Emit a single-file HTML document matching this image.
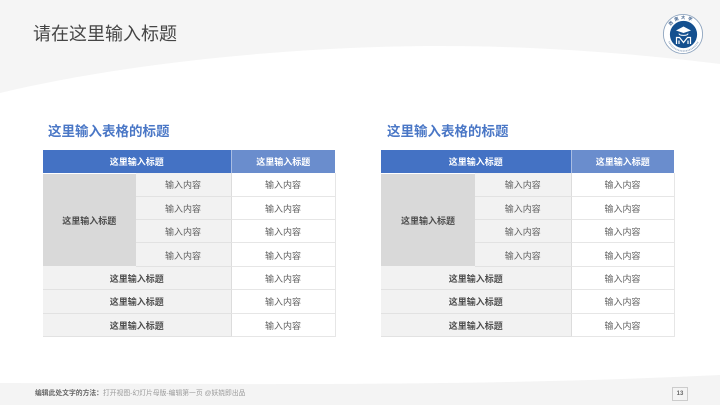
<!DOCTYPE html>
<html lang="zh">
<head>
<meta charset="utf-8">
<style>
html,body{margin:0;padding:0;width:720px;height:405px;overflow:hidden;background:#fff}
body{position:relative;font-family:"Liberation Sans","Noto Sans CJK SC",sans-serif;color:#636363}
.bg{position:absolute;left:0;top:0}
.title{position:absolute;left:33px;top:21px;font-size:18px;line-height:26px;color:#454545;white-space:nowrap}
.sub{position:absolute;top:122px;font-size:13.5px;line-height:20px;font-weight:700;color:#4a77c6;white-space:nowrap}
table{position:absolute;top:150px;width:292px;height:187px;border-collapse:collapse;table-layout:fixed;font-size:9px;text-align:center}
td{padding:2px 0 0;border:0;line-height:12px;box-sizing:border-box}
.h1{background:#4472c4;color:#fff;font-weight:700;height:23px;padding:1px 0 0}
.h2{background:#6a8dcd;color:#fff;font-weight:700;border-left:1px solid #a9bde3;padding:1px 0 0}
.g{background:#d9d9d9;color:#4d4d4d;font-weight:700;border-top:1px solid #fff}
.m{background:#f2f2f2;border-bottom:1px solid #e2e2e2;height:23.2px}
.w{background:#fff;border-bottom:1px solid #e6e6e6;border-right:1px solid #e6e6e6;border-left:1px solid #dcdcdc}
.b{background:#f2f2f2;color:#4d4d4d;font-weight:700;border-bottom:1px solid #e2e2e2;height:23.3px}
.foot{position:absolute;left:35px;top:389px;font-size:6.8px;line-height:10px;color:#9a9a9a;white-space:nowrap}
.foot b{color:#666}
.num{position:absolute;left:672px;top:387px;width:16px;height:14px;box-sizing:border-box;border:1px solid #cccccc;font-size:6px;font-weight:700;line-height:12px;text-align:center;color:#666}
.logo{position:absolute;left:658px;top:10px}
</style>
</head>
<body>
<svg class="bg" width="720" height="405" viewBox="0 0 720 405">
<path d="M0 0H720V64C640 54 540 46 440 46C300 46 130 62 0 93Z" fill="#f5f5f5"/>
<path d="M0 383C220 384 470 387 720 375V405H0Z" fill="#f4f4f4"/>
</svg>
<div class="title">请在这里输入标题</div>
<svg class="logo" width="48" height="48" viewBox="0 0 48 48">
<circle cx="25" cy="24" r="19.6" fill="#fff" stroke="#8fa5bf" stroke-width="0.9"/>
<circle cx="25.5" cy="24.5" r="13.6" fill="#14508f"/>
<defs><path id="ta" d="M10 24.5A15.5 15.5 0 0 1 41 24.5"/></defs>
<text font-size="4.2" font-weight="700" fill="#3c5f8c" letter-spacing="2.2" font-family="Liberation Sans,Noto Sans CJK SC,sans-serif"><textPath href="#ta" startOffset="9">西南大学</textPath></text>
<path d="M18 20.5L25.5 16.5L33 20.5L25.5 23Z" fill="#fff"/>
<path d="M21 23.5C21 26 30 26 30 23.5" fill="none" stroke="#fff" stroke-width="1"/>
<path d="M18.5 34V27.5H21.5L25.5 32.5L29.5 27.5H32.5V34M21 34V30.5M30 34V30.5" fill="none" stroke="#fff" stroke-width="1.2"/>
<path d="M11 31.5A15.8 15.8 0 0 0 40 31.5" fill="none" stroke="#a9b9cc" stroke-width="1.6" stroke-dasharray="1 .6"/>
</svg>

<div class="sub" style="left:48px">这里输入表格的标题</div>
<table style="left:43px">
<colgroup><col style="width:92.5px"><col style="width:95.5px"><col style="width:104px"></colgroup>
<tr><td class="h1" colspan="2">这里输入标题</td><td class="h2">这里输入标题</td></tr>
<tr><td class="g" rowspan="4">这里输入标题</td><td class="m">输入内容</td><td class="w">输入内容</td></tr>
<tr><td class="m">输入内容</td><td class="w">输入内容</td></tr>
<tr><td class="m">输入内容</td><td class="w">输入内容</td></tr>
<tr><td class="m">输入内容</td><td class="w">输入内容</td></tr>
<tr><td class="b" colspan="2">这里输入标题</td><td class="w">输入内容</td></tr>
<tr><td class="b" colspan="2">这里输入标题</td><td class="w">输入内容</td></tr>
<tr><td class="b" colspan="2">这里输入标题</td><td class="w">输入内容</td></tr>
</table>

<div class="sub" style="left:387px">这里输入表格的标题</div>
<table style="left:381px;width:293px">
<colgroup><col style="width:94px"><col style="width:96px"><col style="width:103px"></colgroup>
<tr><td class="h1" colspan="2">这里输入标题</td><td class="h2">这里输入标题</td></tr>
<tr><td class="g" rowspan="4">这里输入标题</td><td class="m">输入内容</td><td class="w">输入内容</td></tr>
<tr><td class="m">输入内容</td><td class="w">输入内容</td></tr>
<tr><td class="m">输入内容</td><td class="w">输入内容</td></tr>
<tr><td class="m">输入内容</td><td class="w">输入内容</td></tr>
<tr><td class="b" colspan="2">这里输入标题</td><td class="w">输入内容</td></tr>
<tr><td class="b" colspan="2">这里输入标题</td><td class="w">输入内容</td></tr>
<tr><td class="b" colspan="2">这里输入标题</td><td class="w">输入内容</td></tr>
</table>

<div class="foot"><b>编辑此处文字的方法：</b>打开视图-幻灯片母版-编辑第一页 @妖娆即出品</div>
<div class="num">13</div>
</body>
</html>
